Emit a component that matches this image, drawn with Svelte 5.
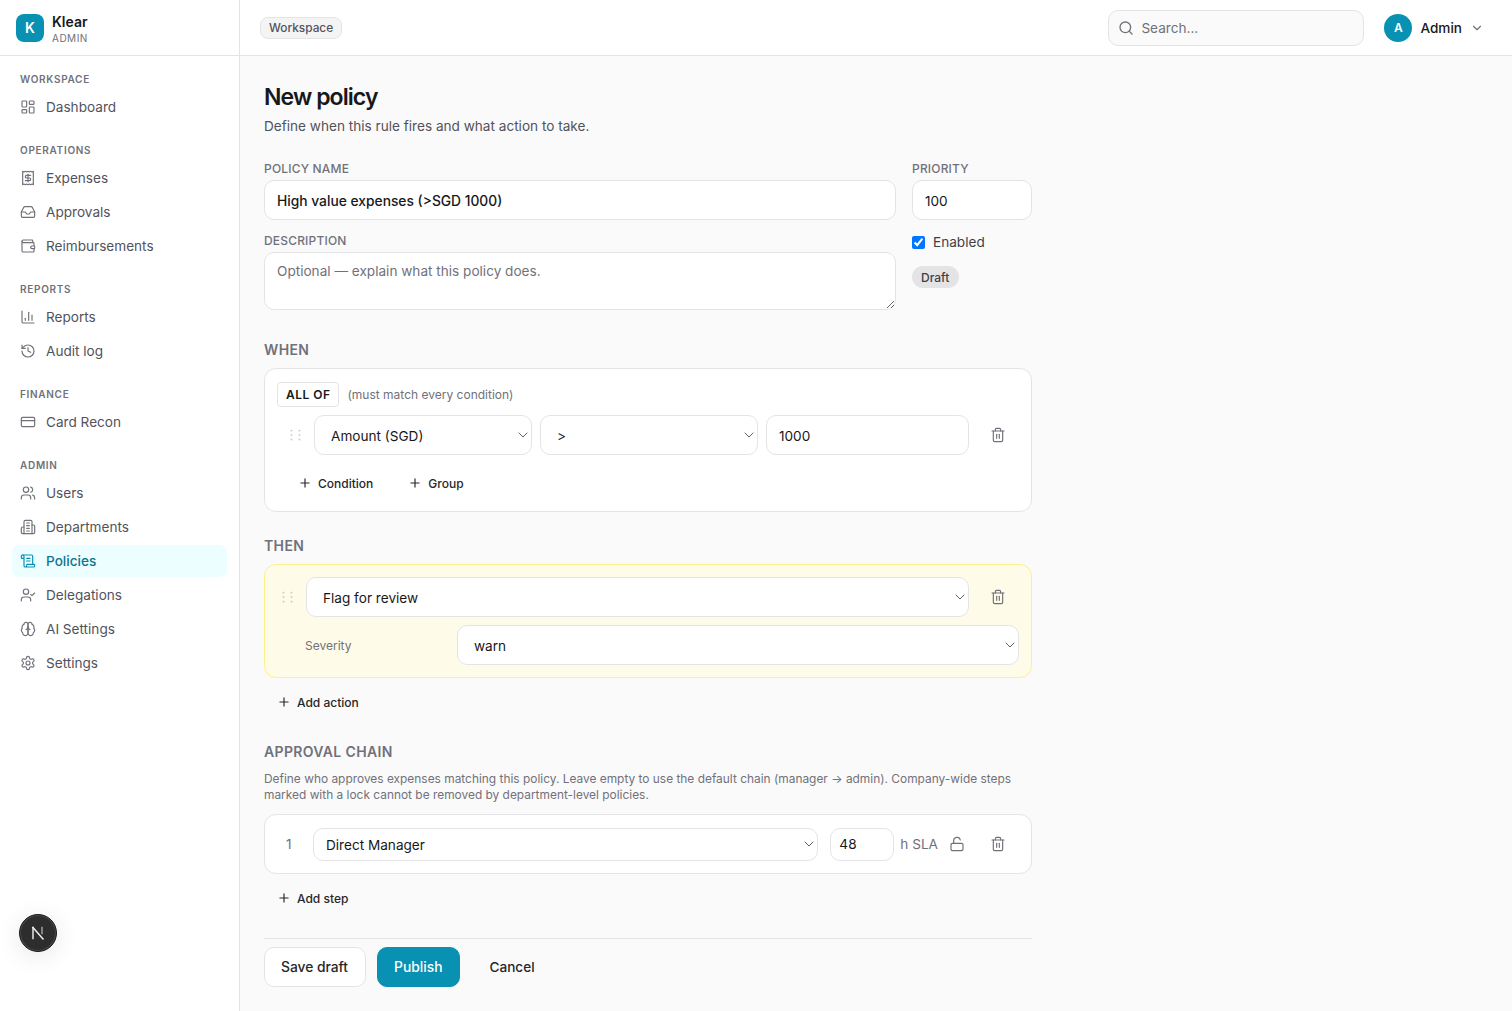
<script lang="ts">
  const icons: Record<string, string> = {
    dashboard: '<rect x="3" y="3" width="7" height="9" rx="1"/><rect x="14" y="3" width="7" height="5" rx="1"/><rect x="14" y="12" width="7" height="9" rx="1"/><rect x="3" y="16" width="7" height="5" rx="1"/>',
    receipt: '<path d="M4 2v20l2-1 2 1 2-1 2 1 2-1 2 1 2-1 2 1V2l-2 1-2-1-2 1-2-1-2 1-2-1-2 1Z"/><path d="M16 8h-6a2 2 0 1 0 0 4h4a2 2 0 1 1 0 4H8"/><path d="M12 17.5v-11"/>',
    inbox: '<polyline points="22 12 16 12 14 15 10 15 8 12 2 12"/><path d="M5.45 5.11 2 12v6a2 2 0 0 0 2 2h16a2 2 0 0 0 2-2v-6l-3.45-6.89A2 2 0 0 0 16.76 4H7.24a2 2 0 0 0-1.79 1.11z"/>',
    wallet: '<path d="M19 7V4a1 1 0 0 0-1-1H5a2 2 0 0 0 0 4h15a1 1 0 0 1 1 1v4h-3a2 2 0 0 0 0 4h3a1 1 0 0 0 1-1v-2a1 1 0 0 0-1-1"/><path d="M3 5v14a2 2 0 0 0 2 2h15a1 1 0 0 0 1-1v-4"/>',
    chart: '<path d="M3 3v16a2 2 0 0 0 2 2h16"/><path d="M18 17V9"/><path d="M13 17V5"/><path d="M8 17v-3"/>',
    history: '<path d="M3 12a9 9 0 1 0 9-9 9.75 9.75 0 0 0-6.74 2.74L3 8"/><path d="M3 3v5h5"/><path d="M12 7v5l4 2"/>',
    card: '<rect x="2" y="5" width="20" height="14" rx="2"/><line x1="2" y1="10" x2="22" y2="10"/>',
    users: '<path d="M16 21v-2a4 4 0 0 0-4-4H6a4 4 0 0 0-4 4v2"/><circle cx="9" cy="7" r="4"/><path d="M22 21v-2a4 4 0 0 0-3-3.87"/><path d="M16 3.13a4 4 0 0 1 0 7.75"/>',
    building: '<path d="M6 22V4a2 2 0 0 1 2-2h8a2 2 0 0 1 2 2v18Z"/><path d="M6 12H4a2 2 0 0 0-2 2v6a2 2 0 0 0 2 2h2"/><path d="M18 9h2a2 2 0 0 1 2 2v9a2 2 0 0 1-2 2h-2"/><path d="M10 6h4"/><path d="M10 10h4"/><path d="M10 14h4"/><path d="M10 18h4"/>',
    scroll: '<path d="M15 12h-5"/><path d="M15 8h-5"/><path d="M19 17V5a2 2 0 0 0-2-2H4"/><path d="M8 21h12a2 2 0 0 0 2-2v-1a1 1 0 0 0-1-1H11a1 1 0 0 0-1 1v1a2 2 0 1 1-4 0V5a2 2 0 1 0-4 0v2a1 1 0 0 0 1 1h3"/>',
    usercheck: '<path d="M16 21v-2a4 4 0 0 0-4-4H6a4 4 0 0 0-4 4v2"/><circle cx="9" cy="7" r="4"/><polyline points="16 11 18 13 22 9"/>',
    brain: '<path d="M12 5a3 3 0 1 0-5.997.125 4 4 0 0 0-2.526 5.77 4 4 0 0 0 .556 6.588A4 4 0 1 0 12 18Z"/><path d="M12 5a3 3 0 1 1 5.997.125 4 4 0 0 1 2.526 5.77 4 4 0 0 1-.556 6.588A4 4 0 1 1 12 18Z"/><path d="M15 13a4.5 4.5 0 0 1-3-4 4.5 4.5 0 0 1-3 4"/>',
    settings: '<path d="M12.22 2h-.44a2 2 0 0 0-2 2v.18a2 2 0 0 1-1 1.73l-.43.25a2 2 0 0 1-2 0l-.15-.08a2 2 0 0 0-2.73.73l-.22.38a2 2 0 0 0 .73 2.73l.15.1a2 2 0 0 1 1 1.72v.51a2 2 0 0 1-1 1.74l-.15.09a2 2 0 0 0-.73 2.73l.22.38a2 2 0 0 0 2.73.73l.15-.08a2 2 0 0 1 2 0l.43.25a2 2 0 0 1 1 1.73V20a2 2 0 0 0 2 2h.44a2 2 0 0 0 2-2v-.18a2 2 0 0 1 1-1.73l.43-.25a2 2 0 0 1 2 0l.15.08a2 2 0 0 0 2.73-.73l.22-.39a2 2 0 0 0-.73-2.73l-.15-.08a2 2 0 0 1-1-1.74v-.5a2 2 0 0 1 1-1.74l.15-.09a2 2 0 0 0 .73-2.73l-.22-.38a2 2 0 0 0-2.73-.73l-.15.08a2 2 0 0 1-2 0l-.43-.25a2 2 0 0 1-1-1.73V4a2 2 0 0 0-2-2z"/><circle cx="12" cy="12" r="3"/>',
    trash: '<path d="M3 6h18"/><path d="M19 6v14c0 1-1 2-2 2H7c-1 0-2-1-2-2V6"/><path d="M8 6V4c0-1 1-2 2-2h4c1 0 2 1 2 2v2"/><line x1="10" y1="11" x2="10" y2="17"/><line x1="14" y1="11" x2="14" y2="17"/>',
    lock: '<rect x="3" y="11" width="18" height="11" rx="2"/><path d="M7 11V7a5 5 0 0 1 9.9-1"/>',
    search: '<circle cx="11" cy="11" r="8"/><path d="m21 21-4.3-4.3"/>',
    plus: '<path d="M5 12h14"/><path d="M12 5v14"/>',
    chevron: '<path d="m6 9 6 6 6-6"/>',
    grip: '<circle cx="6.75" cy="5.25" r="0.3"/><circle cx="18.75" cy="5.25" r="0.3"/><circle cx="6.75" cy="12" r="0.3"/><circle cx="18.75" cy="12" r="0.3"/><circle cx="6.75" cy="18.75" r="0.3"/><circle cx="18.75" cy="18.75" r="0.3"/>'
  };

  const nav = [
    { title: 'Workspace', items: [{ label: 'Dashboard', icon: 'dashboard' }] },
    {
      title: 'Operations',
      items: [
        { label: 'Expenses', icon: 'receipt' },
        { label: 'Approvals', icon: 'inbox' },
        { label: 'Reimbursements', icon: 'wallet' }
      ]
    },
    {
      title: 'Reports',
      items: [
        { label: 'Reports', icon: 'chart' },
        { label: 'Audit log', icon: 'history' }
      ]
    },
    { title: 'Finance', items: [{ label: 'Card Recon', icon: 'card' }] },
    {
      title: 'Admin',
      items: [
        { label: 'Users', icon: 'users' },
        { label: 'Departments', icon: 'building' },
        { label: 'Policies', icon: 'scroll' },
        { label: 'Delegations', icon: 'usercheck' },
        { label: 'AI Settings', icon: 'brain' },
        { label: 'Settings', icon: 'settings' }
      ]
    }
  ];

  let enabled = $state(true);
</script>

{#snippet icon(name: string, size = 16)}
  <svg class="icon" width={size} height={size} viewBox="0 0 24 24" fill="none" stroke="currentColor" stroke-width="2" stroke-linecap="round" stroke-linejoin="round">
    {@html icons[name]}
  </svg>
{/snippet}

{#snippet picker(value: string, options: string[], cls = '')}
  <div class="picker {cls}">
    <select {value}>
      {#each options as o}
        <option>{o}</option>
      {/each}
    </select>
    <span class="chev">{@render icon('chevron', 16)}</span>
  </div>
{/snippet}

{#snippet trash()}
  <button class="trash" aria-label="Delete">{@render icon('trash')}</button>
{/snippet}

<div class="shell">
  <aside class="sidebar">
    <div class="brand">
      <div class="logo">K</div>
      <div class="brand-text">
        <div class="brand-name">Klear</div>
        <div class="brand-role">ADMIN</div>
      </div>
    </div>
    <nav>
      {#each nav as section}
        <div class="nav-section">
          <div class="nav-title">{section.title}</div>
          <ul>
            {#each section.items as item}
              <li class:active={item.label === 'Policies'}>
                {@render icon(item.icon)}
                <span>{item.label}</span>
              </li>
            {/each}
          </ul>
        </div>
      {/each}
    </nav>
    <div class="next-badge">
      <svg width="16" height="16" viewBox="0 0 16 16" fill="none" stroke-width="1.4" stroke-linecap="square">
        <path d="M3 2.5v11" stroke="#f2f2f2" />
        <path d="M3 2.5 13 14" stroke="#f2f2f2" />
        <path d="M12 2.5v6" stroke="#a8a8a8" />
      </svg>
    </div>
  </aside>

  <div class="content">
    <header class="topbar">
      <span class="chip">Workspace</span>
      <div class="topbar-right">
        <div class="search">
          {@render icon('search')}
          <span>Search...</span>
        </div>
        <div class="user">
          <span class="avatar">A</span>
          <span class="user-name">Admin</span>
          <span class="user-chev">{@render icon('chevron', 14)}</span>
        </div>
      </div>
    </header>

    <main>
      <div class="page">
        <h1>New policy</h1>
        <p class="sub">Define when this rule fires and what action to take.</p>

        <div class="meta">
          <div class="meta-left">
            <div>
              <label for="pname">Policy name</label>
              <input id="pname" class="field strong" value="High value expenses (>SGD 1000)" />
            </div>
            <div>
              <label for="pdesc">Description</label>
              <textarea id="pdesc" class="field" placeholder="Optional — explain what this policy does."></textarea>
            </div>
          </div>
          <div class="meta-right">
            <div>
              <label for="prio">Priority</label>
              <input id="prio" class="field" value="100" />
            </div>
            <div class="check">
              <input id="enabled" type="checkbox" bind:checked={enabled} />
              <span>Enabled</span>
            </div>
            <span class="draft">Draft</span>
          </div>
        </div>

        <h2 class="first">When</h2>
        <section class="card">
          <div class="group-head">
            <span class="all-of">ALL OF</span>
            <span class="hint">(must match every condition)</span>
          </div>
          <div class="cond-row">
            <span class="grip">{@render icon('grip', 16)}</span>
            {@render picker('Amount (SGD)', ['Amount (SGD)', 'Category', 'Department'], 'wide')}
            {@render picker('>', ['>', '>=', '<', '<=', '='], 'wide')}
            <input class="field cond-value" value="1000" />
            {@render trash()}
          </div>
          <div class="cond-actions">
            <button class="add">{@render icon('plus', 14)}Condition</button>
            <button class="add">{@render icon('plus', 14)}Group</button>
          </div>
        </section>

        <h2>Then</h2>
        <section class="card then">
          <div class="then-row">
            <span class="grip">{@render icon('grip', 16)}</span>
            {@render picker('Flag for review', ['Flag for review', 'Require approval', 'Block'], 'grow')}
            {@render trash()}
          </div>
          <div class="sev-row">
            <span class="sev-label">Severity</span>
            {@render picker('warn', ['info', 'warn', 'critical'], 'grow')}
          </div>
        </section>
        <button class="add below">{@render icon('plus', 14)}Add action</button>

        <h2 class="tight">Approval chain</h2>
        <p class="chain-desc">Define who approves expenses matching this policy. Leave empty to use the default chain (manager → admin). Company-wide steps marked with a lock cannot be removed by department-level policies.</p>
        <section class="card">
          <div class="step-row">
            <span class="step-no">1</span>
            {@render picker('Direct Manager', ['Direct Manager', 'Department Head', 'Finance'], 'grow small')}
            <input class="field sla" value="48" />
            <span class="sla-unit">h SLA</span>
            <span class="lock">{@render icon('lock')}</span>
            {@render trash()}
          </div>
        </section>
        <button class="add below">{@render icon('plus', 14)}Add step</button>

        <footer class="form-foot">
          <button class="btn">Save draft</button>
          <button class="btn primary">Publish</button>
          <button class="btn ghost">Cancel</button>
        </footer>
      </div>
    </main>
  </div>
</div>

<style>
  :global(body) {
    font-family: Inter, "Liberation Sans", sans-serif;
    color: #18181b;
    background: #fafafa;
  }
  * {
    box-sizing: border-box;
  }
  .icon {
    display: block;
    flex: none;
  }
  .shell {
    display: flex;
    height: 100vh;
    overflow: hidden;
  }

  /* sidebar */
  .sidebar {
    width: 240px;
    flex: none;
    background: #fff;
    border-right: 1px solid #e4e4e7;
  }
  .brand {
    height: 56px;
    display: flex;
    align-items: center;
    gap: 8px;
    padding: 0 16px;
    border-bottom: 1px solid #e4e4e7;
  }
  .logo {
    width: 28px;
    height: 28px;
    border-radius: 8px;
    background: #0891b2;
    color: #fff;
    font-size: 14px;
    font-weight: 600;
    display: flex;
    align-items: center;
    justify-content: center;
  }
  .brand-text {
    padding-top: 4px;
  }
  .brand-name {
    font-size: 14px;
    font-weight: 600;
    line-height: 16px;
  }
  .brand-role {
    margin-top: 1px;
    font-size: 10px;
    line-height: 14px;
    color: #71717a;
    letter-spacing: 0.05em;
  }
  nav {
    padding: 15px 12px 0;
  }
  .nav-section + .nav-section {
    margin-top: 19px;
  }
  .nav-title {
    font-size: 10px;
    font-weight: 600;
    line-height: 16px;
    letter-spacing: 0.07em;
    text-transform: uppercase;
    color: #71717a;
    padding-left: 8px;
    margin-bottom: 4px;
  }
  ul {
    list-style: none;
    margin: 0;
    padding: 0;
    display: flex;
    flex-direction: column;
    gap: 2px;
  }
  li {
    height: 32px;
    display: flex;
    align-items: center;
    gap: 10px;
    padding: 0 8px;
    border-radius: 8px;
    font-size: 13.6px;
    color: #52525b;
  }
  li span {
    position: relative;
    top: -0.5px;
  }
  li .icon {
    color: #71717a;
    stroke-width: 1.75;
  }
  li.active {
    background: #ecfeff;
    color: #0e7490;
    font-weight: 500;
  }
  li.active .icon {
    color: #0891b2;
  }
  .next-badge {
    position: fixed;
    left: 19px;
    top: 914px;
    width: 38px;
    height: 38px;
    border-radius: 50%;
    background: #2d2d2d;
    border: 1px solid #1c1c1c;
    box-shadow: inset 0 0 0 1px #4a4a4a, 0 4px 24px rgba(0, 0, 0, 0.1);
    display: flex;
    align-items: center;
    justify-content: center;
  }

  /* top bar */
  .content {
    flex: 1;
    min-width: 0;
    display: flex;
    flex-direction: column;
  }
  .topbar {
    height: 56px;
    flex: none;
    background: #fff;
    border-bottom: 1px solid #e4e4e7;
    display: flex;
    align-items: center;
    justify-content: space-between;
    padding: 0 24px 0 20px;
  }
  .chip {
    height: 22px;
    display: inline-flex;
    align-items: center;
    padding: 0 8px;
    border-radius: 8px;
    background: #f4f4f5;
    border: 1px solid #e4e4e7;
    font-size: 11.85px;
    font-weight: 500;
    color: #52525b;
  }
  .topbar-right {
    display: flex;
    align-items: center;
    gap: 20px;
  }
  .search {
    width: 256px;
    height: 36px;
    background: #fafafa;
    border: 1px solid #e4e4e7;
    border-radius: 10px;
    display: flex;
    align-items: center;
    gap: 7px;
    padding: 0 9px;
    font-size: 13.6px;
    color: #71717a;
  }
  .user {
    display: flex;
    align-items: center;
    gap: 8px;
    font-size: 13.6px;
    font-weight: 500;
  }
  .avatar {
    width: 28px;
    height: 28px;
    border-radius: 50%;
    background: #0891b2;
    color: #fff;
    font-size: 12px;
    font-weight: 600;
    display: flex;
    align-items: center;
    justify-content: center;
  }
  .user-chev {
    color: #71717a;
    margin-right: 4px;
  }

  /* form */
  main {
    flex: 1;
    overflow: hidden;
    padding: 25px 24px 24px;
  }
  .page {
    width: 768px;
  }
  h1 {
    margin: 0;
    font-size: 23px;
    line-height: 32px;
    font-weight: 600;
    letter-spacing: -0.04em;
  }
  .sub {
    margin: 3px 0 0;
    font-size: 13.6px;
    line-height: 20px;
    color: #52525b;
  }
  .meta {
    display: grid;
    grid-template-columns: 632px 120px;
    gap: 16px;
    margin-top: 25px;
  }
  .meta-left {
    display: flex;
    flex-direction: column;
    gap: 13px;
  }
  .meta-right {
    display: flex;
    flex-direction: column;
    align-items: flex-start;
  }
  .meta-right > div:first-child {
    width: 100%;
  }
  label {
    display: block;
    font-size: 12px;
    font-weight: 500;
    line-height: 16px;
    letter-spacing: 0.015em;
    text-transform: uppercase;
    color: #71717a;
    margin-bottom: 3px;
  }
  .field {
    display: block;
    width: 100%;
    height: 40px;
    background: #fff;
    border: 1px solid #e4e4e7;
    border-radius: 10px;
    padding: 1px 12px 0;
    font: inherit;
    font-size: 13.6px;
    color: #18181b;
    outline: none;
  }
  .strong {
    font-weight: 500;
    font-size: 13.8px;
  }
  textarea.field {
    height: 58px;
    padding: 8px 12px;
    line-height: 20px;
  }
  textarea::placeholder {
    color: #71717a;
  }
  .check {
    display: flex;
    align-items: center;
    gap: 8px;
    height: 20px;
    margin-top: 12px;
    font-size: 13.6px;
    color: #3f3f46;
  }
  .check input {
    margin: 0;
    width: 13px;
    height: 13px;
    accent-color: #0075ff;
  }
  .draft {
    margin-top: 14px;
    height: 22px;
    display: inline-flex;
    align-items: center;
    padding: 0 10px 0 9px;
    border-radius: 11px;
    background: #e4e4e7;
    font-size: 12px;
    font-weight: 500;
    color: #3f3f46;
  }
  h2 {
    margin: 24px 0 8px;
    font-size: 14px;
    line-height: 20px;
    font-weight: 600;
    letter-spacing: 0.025em;
    text-transform: uppercase;
    color: #71717a;
  }
  h2.first {
    margin-top: 30px;
  }
  h2.tight {
    margin-bottom: 9px;
  }
  .card {
    background: #fff;
    border: 1px solid #e4e4e7;
    border-radius: 12px;
    padding: 12px;
  }
  .then {
    background: #fefce8;
    border-color: #fef08a;
    display: flex;
    flex-direction: column;
    gap: 8px;
  }
  .group-head {
    display: flex;
    align-items: center;
    gap: 8px;
    margin-top: 1px;
  }
  .all-of {
    height: 25px;
    display: inline-flex;
    align-items: center;
    padding: 0 8px;
    border: 1px solid #e4e4e7;
    border-radius: 4px;
    font-size: 12px;
    font-weight: 600;
    letter-spacing: 0.04em;
  }
  .hint {
    font-size: 12px;
    color: #71717a;
  }
  .cond-row,
  .then-row,
  .step-row {
    display: flex;
    align-items: center;
    gap: 8px;
  }
  .cond-row {
    margin-top: 8px;
    padding: 0 5px 0 10px;
  }
  .then-row {
    padding-right: 5px;
    padding-left: 2px;
  }
  .grip {
    color: #a1a1aa;
    margin-right: 3px;
  }
  .picker {
    position: relative;
  }
  .picker select {
    appearance: none;
    display: block;
    width: 100%;
    height: 40px;
    background: #fff;
    border: 1px solid #e4e4e7;
    border-radius: 10px;
    padding: 1px 28px 0 16px;
    font: inherit;
    font-size: 13.6px;
    color: #18181b;
    outline: none;
  }
  .picker .chev {
    position: absolute;
    right: 1px;
    top: 50%;
    transform: translateY(-50%);
    color: #52525b;
    pointer-events: none;
  }
  .picker .chev :global(svg) {
    stroke-width: 1.4;
  }
  .wide {
    width: 218px;
  }
  .grow {
    flex: 1;
    min-width: 0;
  }
  .cond-value {
    flex: 1;
    min-width: 0;
    width: auto;
  }
  .trash {
    width: 32px;
    height: 32px;
    flex: none;
    margin-left: 5px;
    border: none;
    background: none;
    padding: 0;
    display: flex;
    align-items: center;
    justify-content: center;
    color: #71717a;
  }
  .trash .icon,
  .lock .icon {
    stroke-width: 1.75;
  }
  .cond-actions {
    display: flex;
    gap: 17px;
    margin: 12px 0 0 12px;
  }
  .add {
    height: 32px;
    display: inline-flex;
    align-items: center;
    gap: 6px;
    padding: 0 9px;
    border: none;
    background: none;
    font: inherit;
    font-size: 12px;
    font-weight: 500;
    color: #27272a;
  }
  .add.below {
    display: flex;
    margin: 8px 0 0 4px;
  }
  .sev-row {
    display: flex;
    align-items: center;
    padding-left: 28px;
  }
  .sev-label {
    width: 152px;
    flex: none;
    font-size: 12px;
    color: #71717a;
  }
  .chain-desc {
    margin: 0 0 11px;
    font-size: 11.92px;
    line-height: 16px;
    color: #71717a;
  }
  .step-row {
    gap: 0;
    height: 34px;
    padding-right: 5px;
  }
  .step-no {
    width: 36px;
    flex: none;
    padding-left: 9px;
    font-size: 13.6px;
    color: #71717a;
  }
  .small select {
    height: 33px;
    padding-left: 12px;
  }
  .sla {
    width: 64px;
    height: 33px;
    padding: 0 8px;
    margin-left: 12px;
    flex: none;
  }
  .sla-unit {
    margin-left: 6px;
    font-size: 13.6px;
    color: #71717a;
  }
  .lock {
    margin-left: 11px;
    color: #71717a;
  }
  .step-row .trash {
    margin-left: 17px;
  }
  .form-foot {
    margin-top: 24px;
    padding-top: 8px;
    border-top: 1px solid #e4e4e7;
    display: flex;
    gap: 12px;
  }
  .btn {
    height: 40px;
    padding: 0 17px 0 16px;
    border-radius: 10px;
    border: 1px solid #e4e4e7;
    background: #fff;
    font: inherit;
    font-size: 13.8px;
    font-weight: 500;
    color: #27272a;
  }
  .primary {
    margin-left: -1px;
    background: #0891b2;
    border-color: #0891b2;
    color: #fff;
  }
  .ghost {
    background: none;
    border-color: transparent;
    font-size: 13.6px;
  }
</style>
